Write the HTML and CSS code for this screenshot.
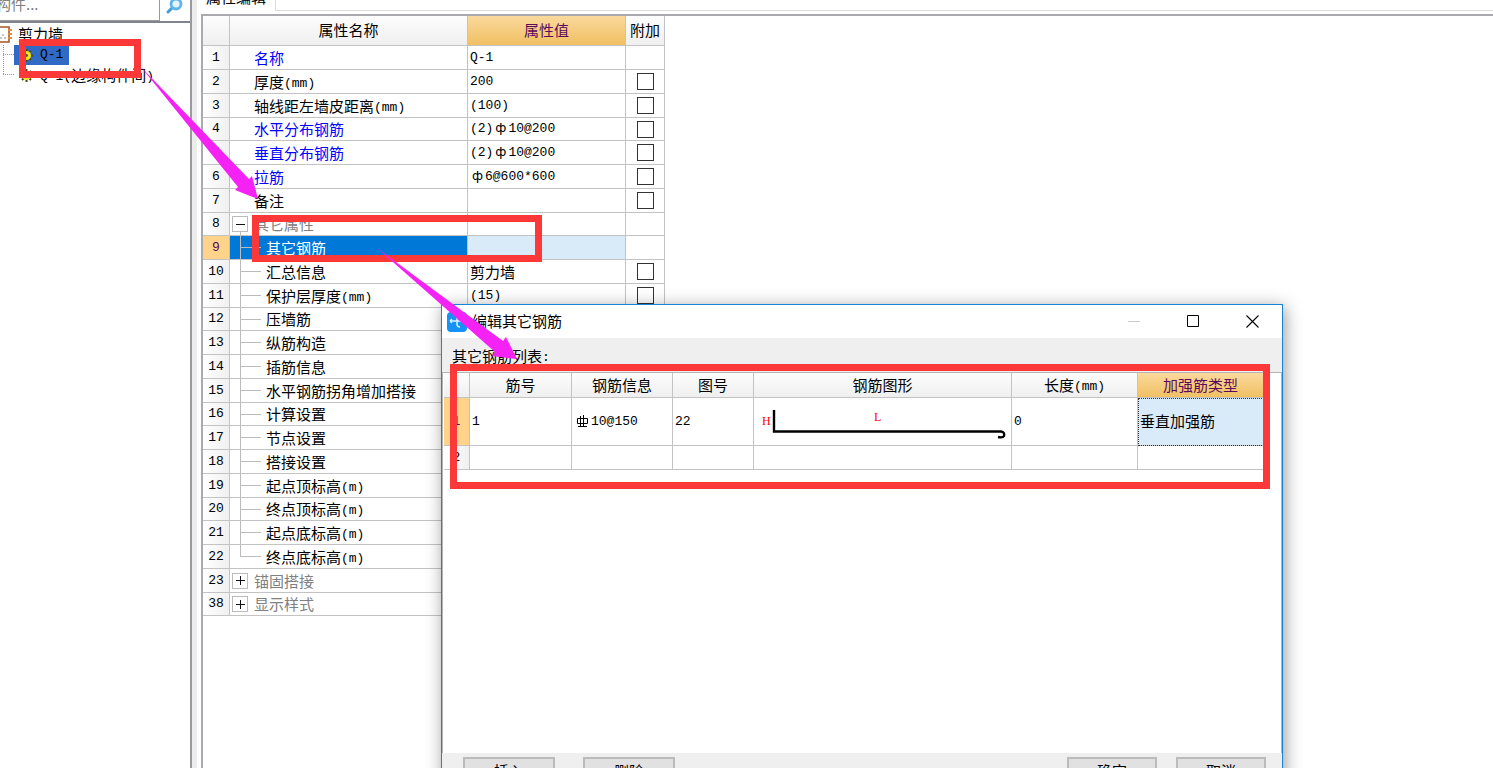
FILE: index.html
```html
<!DOCTYPE html>
<html lang="zh-CN">
<head>
<meta charset="utf-8">
<title>属性编辑</title>
<link rel="stylesheet" href="styles.css">
</head>
<body>
<div class="app">
  <aside class="sidebar">
    <div class="search">
      <input class="search-box" type="text" aria-label="构件" placeholder="构件...">
      <button class="search-btn" aria-label="搜索">
        <svg width="20" height="20" viewBox="0 0 20 20"><path d="M3 16L7 12" stroke="#3f9bdc" stroke-width="3" stroke-linecap="round"/><circle cx="11" cy="8" r="5" fill="#e4f5ff" stroke="#5fb4ec" stroke-width="2.8"/></svg>
      </button>
    </div>
    <div class="tree">
      <div class="node root">
        <svg width="14" height="18" viewBox="0 0 14 18"><path d="M-3 1H9V16H-3" fill="#fff" stroke="#a5562c" stroke-width="1.6"/><path d="M8 4h4M8 8h4M8 12h4" stroke="#e08a3c" stroke-width="2"/><path d="M0 12h2M4 12h2M2 9h2" stroke="#8a8a8a"/></svg>
        <span>剪力墙</span>
      </div>
      <div class="node leaf">
        <span class="picked">
          <svg class="gear" width="13" height="13" viewBox="0 0 13 13"><path d="M6.5 0v13M0 6.5h13M2 2l9 9M11 2l-9 9" stroke="#4a4a10" stroke-width="2"/><circle cx="6.5" cy="6.5" r="4.5" fill="#f4e51c"/><circle cx="6.5" cy="6.5" r="1.4" fill="#54540c"/></svg>
          <span class="m">Q-1</span>
        </span>
      </div>
      <div class="node leaf last">
        <span class="plain">
          <svg class="gear" width="13" height="13" viewBox="0 0 13 13"><path d="M6.5 0v13M0 6.5h13M2 2l9 9M11 2l-9 9" stroke="#4a4a10" stroke-width="2"/><circle cx="6.5" cy="6.5" r="4.5" fill="#f4e51c"/><circle cx="6.5" cy="6.5" r="1.4" fill="#54540c"/></svg>
          <span><span class="m">Q-1(</span>边缘构件间<span class="m">)</span></span>
        </span>
      </div>
    </div>
  </aside>
  <div class="splitter"></div>
  <main class="panel">
    <div class="tabs"><span class="tab">属性编辑</span><span class="tab-rest"></span></div>
    <div class="sheet">
      <table class="props">
        <colgroup><col class="c-no"><col class="c-name"><col class="c-val"><col class="c-add"></colgroup>
        <thead><tr><th></th><th>属性名称</th><th class="hot">属性值</th><th>附加</th></tr></thead>
        <tbody>
          <tr><th>1</th><td class="link">名称</td><td class="m">Q-1</td><td></td></tr>
          <tr><th>2</th><td>厚度<span class="m">(mm)</span></td><td class="m">200</td><td><input type="checkbox" aria-label="厚度"></td></tr>
          <tr><th>3</th><td>轴线距左墙皮距离<span class="m">(mm)</span></td><td class="m">(100)</td><td><input type="checkbox" aria-label="轴线距左墙皮距离"></td></tr>
          <tr><th>4</th><td class="link">水平分布钢筋</td><td class="m">(2)<span class="phi">ф</span>10@200</td><td><input type="checkbox" aria-label="水平分布钢筋"></td></tr>
          <tr><th>5</th><td class="link">垂直分布钢筋</td><td class="m">(2)<span class="phi">ф</span>10@200</td><td><input type="checkbox" aria-label="垂直分布钢筋"></td></tr>
          <tr><th>6</th><td class="link">拉筋</td><td class="m"><span class="phi">ф</span>6@600*600</td><td><input type="checkbox" aria-label="拉筋"></td></tr>
          <tr><th>7</th><td>备注</td><td></td><td><input type="checkbox" aria-label="备注"></td></tr>
          <tr class="group open"><th>8</th><td><button class="fold" aria-label="收起"><svg width="9" height="9"><path d="M0 4.5h9" stroke="#111"/></svg></button>其它属性</td><td></td><td></td></tr>
          <tr class="child current"><th>9</th><td>其它钢筋</td><td></td><td></td></tr>
          <tr class="child"><th>10</th><td>汇总信息</td><td>剪力墙</td><td><input type="checkbox" aria-label="汇总信息"></td></tr>
          <tr class="child"><th>11</th><td>保护层厚度<span class="m">(mm)</span></td><td class="m">(15)</td><td><input type="checkbox" aria-label="保护层厚度"></td></tr>
          <tr class="child"><th>12</th><td>压墙筋</td><td></td><td></td></tr>
          <tr class="child"><th>13</th><td>纵筋构造</td><td></td><td></td></tr>
          <tr class="child"><th>14</th><td>插筋信息</td><td></td><td></td></tr>
          <tr class="child"><th>15</th><td>水平钢筋拐角增加搭接</td><td></td><td></td></tr>
          <tr class="child"><th>16</th><td>计算设置</td><td></td><td></td></tr>
          <tr class="child"><th>17</th><td>节点设置</td><td></td><td></td></tr>
          <tr class="child"><th>18</th><td>搭接设置</td><td></td><td></td></tr>
          <tr class="child"><th>19</th><td>起点顶标高<span class="m">(m)</span></td><td></td><td></td></tr>
          <tr class="child"><th>20</th><td>终点顶标高<span class="m">(m)</span></td><td></td><td></td></tr>
          <tr class="child"><th>21</th><td>起点底标高<span class="m">(m)</span></td><td></td><td></td></tr>
          <tr class="child end"><th>22</th><td>终点底标高<span class="m">(m)</span></td><td></td><td></td></tr>
          <tr class="group"><th>23</th><td><button class="fold" aria-label="展开"><svg width="9" height="9"><path d="M0 4.5h9M4.5 0v9" stroke="#111"/></svg></button>锚固搭接</td><td></td><td></td></tr>
          <tr class="group"><th>38</th><td><button class="fold" aria-label="展开"><svg width="9" height="9"><path d="M0 4.5h9M4.5 0v9" stroke="#111"/></svg></button>显示样式</td><td></td><td></td></tr>
        </tbody>
      </table>
    </div>
  </main>

  <section class="dialog" role="dialog" aria-labelledby="dlg-title">
    <header class="titlebar">
      <svg width="20" height="20" viewBox="0 0 20 20"><rect width="20" height="20" rx="4" fill="#1492f5"/><path d="M10 4v8q0 3 3 3M3 9h13M3 9l2-2M3 9l2 2M16 7v4" fill="none" stroke="#d9f2ff" stroke-width="1.5"/></svg>
      <h1 id="dlg-title">编辑其它钢筋</h1>
      <div class="win-btns">
        <button aria-label="最小化" disabled><svg width="13" height="13"><path d="M0 6.5h12" stroke="#c8c8c8"/></svg></button>
        <button aria-label="最大化"><svg width="13" height="13"><path d="M.5 .5h11v11h-11z" fill="none" stroke="#000"/></svg></button>
        <button aria-label="关闭"><svg width="13" height="13"><path d="M.5 .5l12 12M12.5 .5l-12 12" stroke="#000" stroke-width="1.1"/></svg></button>
      </div>
    </header>
    <p class="caption">其它钢筋列表<span class="m">:</span></p>
    <div class="list">
      <table class="bars">
        <colgroup><col class="b-no"><col class="b-id"><col class="b-info"><col class="b-fig"><col class="b-shape"><col class="b-len"><col class="b-type"></colgroup>
        <thead><tr><th></th><th>筋号</th><th>钢筋信息</th><th>图号</th><th>钢筋图形</th><th>长度<span class="m">(mm)</span></th><th class="hot">加强筋类型</th></tr></thead>
        <tbody>
          <tr class="tall"><th class="on">1</th><td class="m">1</td><td class="m"><svg class="rebar" width="15" height="13" viewBox="0 0 15 13"><path d="M2.5 3.5h10v5h-10zM5.500 1v11M8.500 0v12M3 11.500h9" fill="none" stroke="#000"/></svg>10@150</td><td class="m">22</td>
            <td class="shape"><svg width="256" height="46" viewBox="0 0 256 46"><path d="M20 11V32.500H247Q251 33 250 37Q249 39 244 38" fill="none" stroke="#000" stroke-width="2.400"/><text x="8" y="26">H</text><text x="120" y="22">L</text></svg></td>
            <td class="m">0</td><td class="focus">垂直加强筋</td></tr>
          <tr><th>2</th><td></td><td></td><td></td><td></td><td></td><td></td></tr>
        </tbody>
      </table>
    </div>
    <footer class="actions">
      <button>插入</button><button>删除</button><button class="ok">确定</button><button>取消</button>
    </footer>
  </section>

  <svg class="marks" width="1493" height="768" viewBox="0 0 1493 768" aria-hidden="true">
    <g fill="none" stroke="#fc3838" stroke-width="7">
      <path d="M22.500 42.500h115v32h-115zM255.500 218.500h283v40h-283zM453.500 367.500h813v118h-813z"/>
    </g>
    <path d="M141 67L249 179L252 176L258 199L235 190L238 187ZM377 248L503 341L506 337L517 359L492 356L495 352Z" fill="#f522f5"/>
  </svg>
</div>
</body>
</html>
```
FILE: styles.css
```css
* { box-sizing: border-box; }
body {
  margin: 0;
  background: #fff;
  color: #000;
  font: 15px/20px "Noto Sans CJK SC", sans-serif;
}
button { font: inherit; padding: 0; }
.m { font-family: "Liberation Mono", "Noto Sans CJK SC", monospace; font-size: 13px; }
span.m { line-height: 14px; vertical-align: 1px; }

.app { position: relative; display: flex; height: 100vh; overflow: hidden; }

/* component tree */
.sidebar { width: 190px; flex: none; display: flex; flex-direction: column; }
.search { height: 21px; display: flex; align-items: flex-end; overflow: hidden; flex: none; }
.search-box {
  width: 160px;
  height: 36px;
  padding: 0;
  border: 1px solid #9a9a9a;
  border-left: 0;
  font: inherit;
  text-indent: -4px;
}
.search-box::placeholder { color: #808080; }
.search-btn { width: 30px; height: 34px; padding: 7px 0 0; border: 0; background: #fff; }
.tree { flex: 1; border-top: 2px solid #7f858e; padding-top: 1px; }
.node { height: 20px; display: flex; align-items: center; white-space: nowrap; }
.root { gap: 4px; height: 21px; }
.root span { padding-bottom: 2px; }
.leaf {
  padding-left: 14px;
  background:
    repeating-linear-gradient(90deg, #999 0 1px, transparent 1px 2px) 3px 9px / 12px 1px no-repeat,
    repeating-linear-gradient(#999 0 1px, transparent 1px 2px) 3px 0 / 1px 20px no-repeat;
}
.leaf.last { background-size: 12px 1px, 1px 10px; }
.picked, .plain { display: flex; align-items: center; gap: 7px; height: 20px; padding: 0 6px; }
.picked { background: #316ac5; }

.splitter { width: 7px; flex: none; background: #ececec; border-left: 2px solid #9a9a9e; }

/* property sheet */
.panel { flex: 1; min-width: 0; padding-left: 4px; display: flex; flex-direction: column; }
.tabs { height: 11px; display: flex; align-items: flex-end; flex: none; overflow: hidden; }
.tab { width: 74px; height: 24px; padding-left: 5px; }
.tab-rest { flex: 1; height: 11px; border: solid #dcdcdc; border-width: 0 0 1px 1px; }
.sheet { flex: 1; margin-top: 3px; border: solid #a9a9b0; border-width: 2px 0 0 2px; }

table { border-collapse: separate; border-spacing: 0; table-layout: fixed; }
th, td { padding: 0 2px; border: solid #c3c3c3; border-width: 0 1px 1px 0; white-space: nowrap; overflow: hidden; text-align: left; }
th { font-weight: 400; text-align: center; padding: 0 0 1px; background: linear-gradient(#fdfdfd, #efefef); }
thead th.hot { background: linear-gradient(#fad99d, #f0c062); color: #5c0a5c; }
tbody th { padding: 0; font-family: "Liberation Mono", monospace; font-size: 13px; background: linear-gradient(90deg, #fff, #f0f0f0); }

.props { width: 462px; }
.c-no { width: 27px; }
.c-name { width: 238px; }
.c-val { width: 158px; }
.c-add { width: 39px; }
.props thead th { height: 30px; }
.props tbody tr { height: 24px; }
.props tbody tr:nth-child(4n) { height: 23px; }
.props td:nth-child(2) { padding-left: 24px; }
.props td:nth-child(4) { padding: 0; }
.props td { line-height: 20px; }
.link { color: #00f; }
.phi { display: inline-block; width: 15px; text-align: center; font-family: "DejaVu Sans", sans-serif; line-height: 16px; }
input[type="checkbox"] {
  appearance: none;
  display: block;
  width: 17px;
  height: 17px;
  margin: 0 auto;
  border: 1px solid #333;
  background: #fff;
}
.props .group td:nth-child(2) { padding-left: 2px; color: #808080; }
.fold {
  display: inline-flex;
  align-items: center;
  justify-content: center;
  width: 16px;
  height: 16px;
  margin: 2px 6px 2px 0;
  border: 1px solid #bbb;
  background: #fff;
  vertical-align: top;
}
.group.open td:nth-child(2) { background: linear-gradient(#bbb, #bbb) 10px 18px / 1px 6px no-repeat; }
.props .child td:nth-child(2) {
  padding-left: 36px;
  background:
    linear-gradient(#bbb, #bbb) 10px 0 / 1px 24px no-repeat,
    linear-gradient(#bbb, #bbb) 10px 11px / 21px 1px no-repeat;
}
.props .child.end td:nth-child(2) { background-size: 1px 12px, 21px 1px; }
.props .current td:nth-child(2) { background-color: #0078d7; color: #fff; }
.current td:nth-child(3) { background: #d9eaf8; }
.current th, .bars th.on { background: #ffd38a; color: #5c0a5c; }

/* dialog window */
.dialog {
  position: absolute;
  left: 441px;
  top: 304px;
  width: 842px;
  display: flex;
  flex-direction: column;
  border: 1px solid #1883d7;
  background: #efefef;
  box-shadow: 2px 3px 16px rgba(0, 0, 0, .4);
}
.titlebar { height: 33px; display: flex; align-items: center; gap: 5px; padding-left: 5px; background: #fff; }
.titlebar h1 { margin: 0; padding-bottom: 2px; font: inherit; }
.win-btns { margin-left: auto; display: flex; }
.win-btns button { display: flex; align-items: center; justify-content: center; width: 59px; height: 33px; border: 0; background: none; }
.caption { margin: 0; height: 34px; padding: 8px 10px 0; }
.list { height: 381px; border: solid #b4b4b4; border-width: 1px 1px 0; background: #fff; padding-left: 1px; }
.bars { width: 820px; }
.b-no { width: 26px; }
.b-id { width: 102px; }
.b-info { width: 101px; }
.b-fig { width: 81px; }
.b-shape { width: 258px; }
.b-len { width: 126px; }
.b-type { width: 126px; }
.bars thead th { height: 25px; }
.bars tbody tr { height: 24px; }
.bars tbody tr.tall { height: 48px; }
.bars .shape { padding: 0; }
.shape svg { display: block; }
.shape text { fill: #f00; font: 12px "Liberation Serif", serif; }
.rebar { vertical-align: middle; margin: 0 1px; }
.bars .focus { padding-bottom: 2px; background: #d9eaf8; outline: 1px dotted #333; outline-offset: -1px; }
.actions { display: flex; padding: 4px 16px 12px 21px; gap: 28px; }
.actions button { width: 92px; height: 27px; border: 2px solid #bbb; background: #e1e1e1; line-height: 20px; }
.actions .ok { margin-left: auto; }
.actions .ok, .actions .ok + button { width: 90px; }
.actions .ok { margin-right: -9px; }

.marks { position: absolute; left: 0; top: 0; pointer-events: none; }
```
